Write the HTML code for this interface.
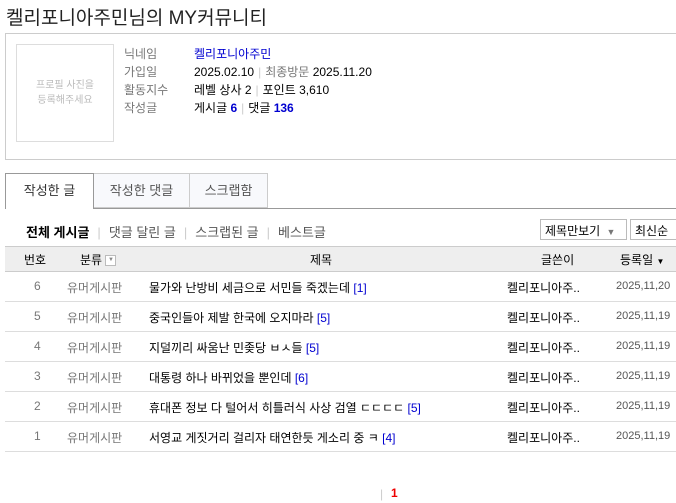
<!DOCTYPE html>
<html><head><meta charset="utf-8"><style>
*{margin:0;padding:0;box-sizing:border-box}
body{width:676px;height:503px;overflow:hidden;background:#fff;font-family:"Liberation Sans","Noto Sans CJK KR","NanumGothic",sans-serif;font-size:12px;color:#000;position:relative}
.a{position:absolute;white-space:nowrap}
.g{color:#777}
.b{color:#0000d0}
.sep{color:#ccc;margin:0 4px}
.sn .sep{margin:0 8px}
.row{position:absolute;left:5px;width:671px;height:30px;border-bottom:1px solid #ddd}
.row>span{position:absolute;top:7px;white-space:nowrap}
</style></head><body>
<div class="a" style="left:6px;top:3px;font-size:19px;color:#222">켈리포니아주민님의 MY커뮤니티</div>
<div class="a" style="left:5px;top:33px;width:680px;height:127px;border:1px solid #ccc"></div>
<div class="a" style="left:16px;top:44px;width:98px;height:98px;border:1px solid #ddd;color:#bbb;font-size:10px;text-align:center;line-height:15px;padding-top:33px;white-space:normal">프로필 사진을<br>등록해주세요</div>
<div class="a g" style="left:124px;top:45px">닉네임</div><div class="a b" style="left:194px;top:45px">켈리포니아주민</div>
<div class="a g" style="left:124px;top:63px">가입일</div><div class="a" style="left:194px;top:63px">2025.02.10<span class="sep">|</span><span class="g">최종방문</span> 2025.11.20</div>
<div class="a g" style="left:124px;top:81px">활동지수</div><div class="a" style="left:194px;top:81px">레벨 상사 2<span class="sep">|</span>포인트 3,610</div>
<div class="a g" style="left:124px;top:99px">작성글</div><div class="a" style="left:194px;top:99px">게시글 <b class="b">6</b><span class="sep">|</span>댓글 <b class="b">136</b></div>
<div class="a" style="left:93px;top:208px;width:583px;border-top:1px solid #999"></div>
<div class="a" style="left:5px;top:173px;width:89px;height:36px;border:1px solid #999;border-bottom:none;background:#fff;text-align:center;line-height:34px;font-size:13px;color:#333">작성한 글</div>
<div class="a" style="left:94px;top:173px;width:96px;height:35px;border:1px solid #ccc;border-left:none;background:#f8f9fc;text-align:center;line-height:34px;font-size:13px;color:#555">작성한 댓글</div>
<div class="a" style="left:190px;top:173px;width:78px;height:35px;border:1px solid #ccc;border-left:none;background:#f8f9fc;text-align:center;line-height:34px;font-size:13px;color:#555">스크랩함</div>
<div class="a sn" style="left:26px;top:222px;font-size:13px"><b>전체 게시글</b><span class="sep">|</span><span style="color:#555">댓글 달린 글</span><span class="sep">|</span><span style="color:#555">스크랩된 글</span><span class="sep">|</span><span style="color:#555">베스트글</span></div>
<div class="a" style="left:540px;top:219px;width:87px;height:21px;border:1px solid #bbb;padding:2px 4px;font-size:12px">제목만보기 <span style="color:#777;font-size:9px;margin-left:3px">▼</span></div>
<div class="a" style="left:630px;top:219px;width:60px;height:21px;border:1px solid #bbb;padding:2px 4px;font-size:12px">최신순</div>
<div class="a" style="left:5px;top:246px;width:671px;height:26px;background:#eee;border-top:1px solid #ccc;border-bottom:1px solid #ccc"></div>
<div class="a" style="left:24px;top:251px">번호</div>
<div class="a" style="left:80px;top:251px">분류 <span style="display:inline-block;width:11px;height:11px;border:1px solid #bbb;background:#fff;font-size:6px;color:#888;text-align:center;line-height:9px;vertical-align:middle">▼</span></div>
<div class="a" style="left:310px;top:251px">제목</div>
<div class="a" style="left:541px;top:251px">글쓴이</div>
<div class="a" style="left:620px;top:251px">등록일 <span style="font-size:8px">▼</span></div>
<div class="row" style="top:272px"><span class="g" style="left:29px">6</span><span class="g" style="left:62px">유머게시판</span><span style="left:144px">물가와 난방비 세금으로 서민들 죽겠는데 <span class="b">[1]</span></span><span style="left:502px">켈리포니아주..</span><span style="left:611px;color:#555;font-size:11px;top:8px">2025,11,20</span></div>
<div class="row" style="top:302px"><span class="g" style="left:29px">5</span><span class="g" style="left:62px">유머게시판</span><span style="left:144px">중국인들아 제발 한국에 오지마라 <span class="b">[5]</span></span><span style="left:502px">켈리포니아주..</span><span style="left:611px;color:#555;font-size:11px;top:8px">2025,11,19</span></div>
<div class="row" style="top:332px"><span class="g" style="left:29px">4</span><span class="g" style="left:62px">유머게시판</span><span style="left:144px">지덜끼리 싸움난 민좆당 ㅂㅅ들 <span class="b">[5]</span></span><span style="left:502px">켈리포니아주..</span><span style="left:611px;color:#555;font-size:11px;top:8px">2025,11,19</span></div>
<div class="row" style="top:362px"><span class="g" style="left:29px">3</span><span class="g" style="left:62px">유머게시판</span><span style="left:144px">대통령 하나 바뀌었을 뿐인데 <span class="b">[6]</span></span><span style="left:502px">켈리포니아주..</span><span style="left:611px;color:#555;font-size:11px;top:8px">2025,11,19</span></div>
<div class="row" style="top:392px"><span class="g" style="left:29px">2</span><span class="g" style="left:62px">유머게시판</span><span style="left:144px">휴대폰 정보 다 털어서 히틀러식 사상 검열 ㄷㄷㄷㄷ <span class="b">[5]</span></span><span style="left:502px">켈리포니아주..</span><span style="left:611px;color:#555;font-size:11px;top:8px">2025,11,19</span></div>
<div class="row" style="top:422px"><span class="g" style="left:29px">1</span><span class="g" style="left:62px">유머게시판</span><span style="left:144px">서영교 게짓거리 걸리자 태연한듯 게소리 중 ㅋ <span class="b">[4]</span></span><span style="left:502px">켈리포니아주..</span><span style="left:611px;color:#555;font-size:11px;top:8px">2025,11,19</span></div>
<div class="a" style="left:380px;top:487px;color:#ccc">|</div>
<div class="a" style="left:391px;top:486px;color:#e00;font-weight:bold">1</div>
</body></html>
